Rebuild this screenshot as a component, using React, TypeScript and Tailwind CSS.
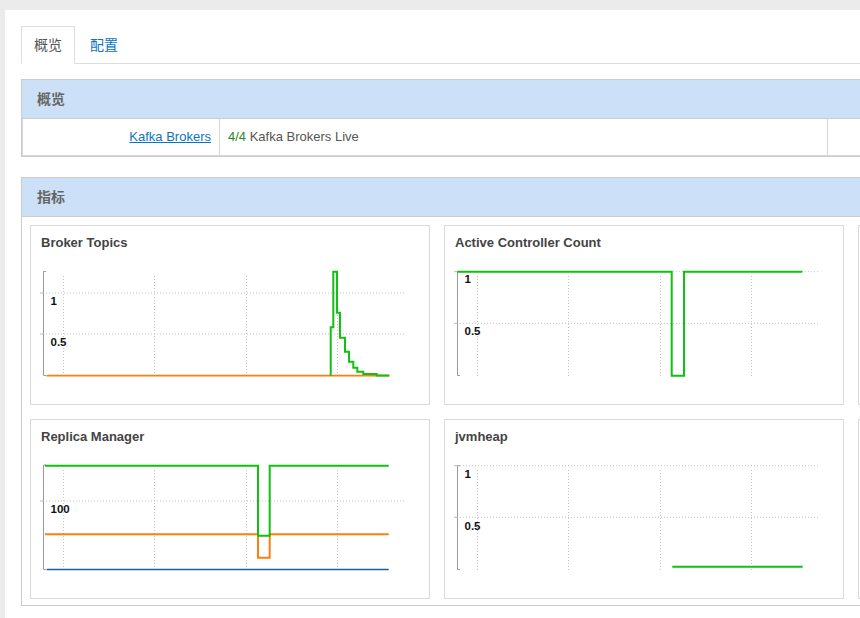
import React from "react";

type Line = { d: string; color: string; w?: number };
type Label = { text: string; y: number };

const VX = [32.5, 123.5, 215.5, 306.5];

function Chart({
  title,
  top,
  hGrid,
  labels,
  lines,
}: {
  title: string;
  top: number;
  hGrid: number[];
  labels: Label[];
  lines: Line[];
}) {
  return (
    <div className="w-[400px] h-[180px] border border-[#d9d9d9] bg-white shrink-0">
      <div className="h-[34px] pl-[10px] pt-[9px] text-[13px] leading-[15px] font-bold text-[#444]">
        {title}
      </div>
      <svg width="398" height="144" className="block">
        {hGrid.map((y, i) => (
          <line
            key={"h" + i}
            x1={12}
            x2={375}
            y1={y}
            y2={y}
            stroke="#c4c4c4"
            strokeWidth={1}
            strokeDasharray="1 2"
          />
        ))}
        {VX.map((x, i) => (
          <line
            key={"v" + i}
            x1={x}
            x2={x}
            y1={16}
            y2={116}
            stroke="#c4c4c4"
            strokeWidth={1}
            strokeDasharray="1 2"
          />
        ))}
        <path
          d={`M15,${top} H12.5 V115.5 H15`}
          fill="none"
          stroke="#999"
          strokeWidth={1}
        />
        {hGrid.map((y, i) => (
          <line key={"t" + i} x1={9} x2={12.5} y1={y} y2={y} stroke="#bbb" strokeWidth={1} />
        ))}
        {labels.map((l, i) => (
          <text
            key={"l" + i}
            x={19.5}
            y={l.y}
            fontFamily="'Liberation Sans', Arial, sans-serif"
            fontWeight="bold"
            fontSize="11.5"
            fill="#111"
          >
            {l.text}
          </text>
        ))}
        {lines.map((ln, i) => (
          <path
            key={"p" + i}
            d={ln.d}
            fill="none"
            stroke={ln.color}
            strokeWidth={ln.w ?? 2}
          />
        ))}
      </svg>
    </div>
  );
}

const GREEN = "#11c011";
const ORANGE = "#ff7f0e";
const BLUE = "#1f5f9a";

export default function App() {
  return (
    <div
      className="w-[860px] h-[618px] overflow-hidden bg-[#ebebeb] pt-[10px] pl-[5px]"
      style={{ fontFamily: "'Liberation Sans', 'Noto Sans CJK SC', Arial, sans-serif" }}
    >
      <div className="bg-white w-[1300px] h-[608px] pl-4 pt-4">
        {/* Tabs */}
        <div className="flex border-b border-[#ddd] w-[1270px] h-[38px]">
          <div className="h-[38px] -mb-px px-3 border border-[#ddd] border-b-white bg-white flex items-center text-[14px] text-[#555]">
            概览
          </div>
          <div className="h-[38px] ml-[2px] px-3 border border-transparent flex items-center text-[14px] text-[#0b74c2]">
            配置
          </div>
        </div>

        {/* Panel 1 */}
        <div className="mt-[15px] w-[1250px] border border-[#ccc]">
          <div className="h-[39px] bg-[#cce1f7] border-b border-[#ccc] flex items-center pl-[15px] text-[14px] font-bold text-[#666]">
            概览
          </div>
          <div className="flex h-[37px] border-l border-b border-[#d6d6d6] text-[13px]">
            <div className="w-[197px] border-r border-[#d6d6d6] flex items-center justify-end pr-2">
              <a className="text-[#0b74c2] underline cursor-pointer">Kafka Brokers</a>
            </div>
            <div className="w-[608px] border-r border-[#d6d6d6] flex items-center pl-2 text-[#555]">
              <span className="text-[#2a8a2a]">4/4</span>
              <span>&nbsp;Kafka Brokers Live</span>
            </div>
            <div className="flex-1" />
          </div>
        </div>

        {/* Panel 2 */}
        <div className="mt-5 w-[1250px] border border-[#ccc]">
          <div className="h-[39px] bg-[#cce1f7] border-b border-[#ccc] flex items-center pl-[15px] text-[14px] font-bold text-[#666]">
            指标
          </div>
          <div className="pl-2 pt-2 pb-[6px] flex flex-col gap-[14px]">
            <div className="flex gap-[14px]">
              <Chart
                title="Broker Topics"
                top={11.5}
                hGrid={[33, 74]}
                labels={[
                  { text: "1", y: 45 },
                  { text: "0.5", y: 86 },
                ]}
                lines={[
                  { d: "M15.5,115.7 H358.3", color: ORANGE, w: 1.8 },
                  {
                    d: "M299.7,115.7 V67.3 H302.3 V11.7 H306 V52.7 H309 V77.7 H314 V91.7 H318 V101.7 H322.3 V107.7 H326.3 V111.7 H332.3 V114 H345.7 V115.4 H358.3",
                    color: GREEN,
                  },
                ]}
              />
              <Chart
                title="Active Controller Count"
                top={11.5}
                hGrid={[11.7, 63.3]}
                labels={[
                  { text: "1", y: 22.5 },
                  { text: "0.5", y: 75 },
                ]}
                lines={[
                  {
                    d: "M12.3,11.7 H226.7 V115.7 H239 V11.7 H357.3",
                    color: GREEN,
                  },
                ]}
              />
              <Chart title="" top={11.5} hGrid={[]} labels={[]} lines={[]} />
            </div>
            <div className="flex gap-[14px]">
              <Chart
                title="Replica Manager"
                top={11}
                hGrid={[47]}
                labels={[{ text: "100", y: 59 }]}
                lines={[
                  { d: "M15.7,115.5 H357.7", color: BLUE, w: 1.5 },
                  {
                    d: "M14,80.3 H227 V103.7 H238.7 V80.3 H357.7",
                    color: ORANGE,
                  },
                  {
                    d: "M14,11.7 H227 V81.7 H238.7 V11.7 H357.7",
                    color: GREEN,
                  },
                ]}
              />
              <Chart
                title="jvmheap"
                top={11.7}
                hGrid={[11.7, 63.3]}
                labels={[
                  { text: "1", y: 23.5 },
                  { text: "0.5", y: 76 },
                ]}
                lines={[{ d: "M227.3,112.7 H357.7", color: GREEN }]}
              />
              <Chart title="" top={11.5} hGrid={[]} labels={[]} lines={[]} />
            </div>
          </div>
        </div>
      </div>
    </div>
  );
}
